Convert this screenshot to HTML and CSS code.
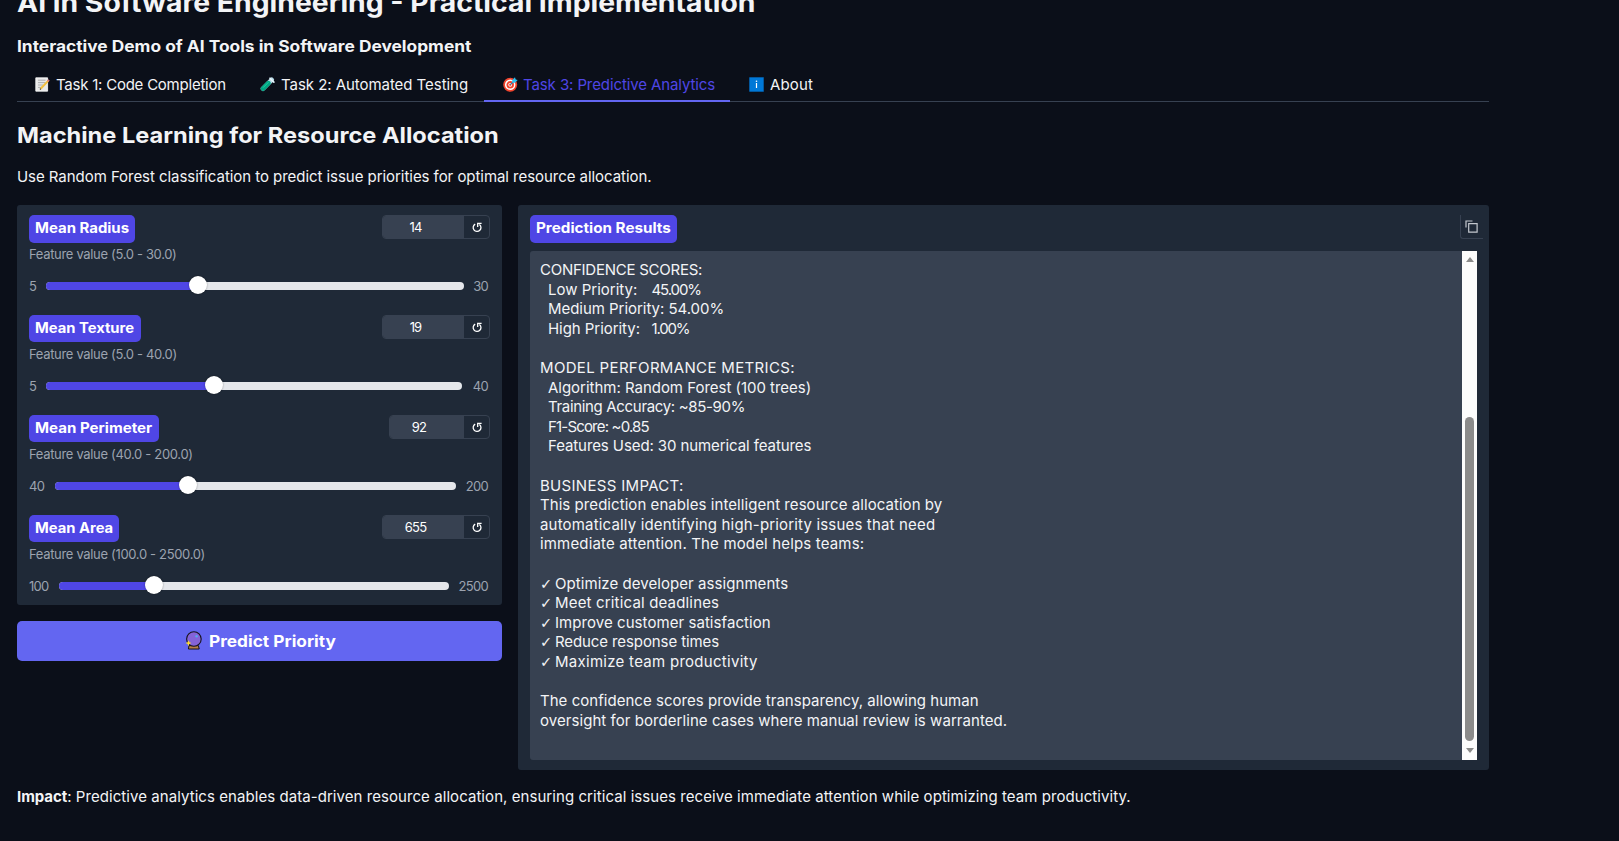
FILE: index.html
```
<!DOCTYPE html>
<html lang="en">
<head>
<meta charset="utf-8">
<title>AI in Software Engineering</title>
<link rel="stylesheet" href="styles.css">
</head>
<body>
<main class="page">
  <h1 class="title">AI in Software Engineering - Practical Implementation</h1>
  <h3 class="subtitle">Interactive Demo of AI Tools in Software Development</h3>

  <nav class="tabs">
    <a class="tab tab-code">
      <svg class="emoji" viewBox="0 0 15 15"><path d="M.8.8h11.8v13.4H.8z" fill="#e9e9e9" stroke="#fff" stroke-width=".8"/><path d="M3 3.2h7.5M3 5.6h7.5M3 8h5M3 10.4h4" stroke="#a9a9ab" stroke-width=".9"/><path d="M5.6 11.8 13.4 3.6" stroke="#f3bf3d" stroke-width="2"/><path d="m12.7 4.3 1.3-1.4" stroke="#d9767c" stroke-width="2"/><path d="m5 12.5.7-.8" stroke="#333" stroke-width="1.2"/></svg>
      <span>Task 1: Code Completion</span></a>
    <a class="tab tab-test">
      <svg class="emoji" viewBox="0 0 15 15"><path d="M11.7 2.8 3 11.7" stroke="#b9dcea" stroke-width="4.6" stroke-linecap="round"/><path d="M8.4 6.2 3 11.7" stroke="#00a583" stroke-width="4.6" stroke-linecap="round"/><path d="M8.5 5.2 3 10.7" stroke="#24cfa4" stroke-width="1" /><path d="m10 1.2 3.9 3.9" stroke="#e8f6fc" stroke-width="1.6" stroke-linecap="round"/></svg>
      <span>Task 2: Automated Testing</span></a>
    <a class="tab tab-predict active">
      <svg class="emoji" viewBox="0 0 15 15"><circle cx="7.2" cy="7.8" r="7" fill="#f0442d"/><circle cx="7.2" cy="7.8" r="4.5" fill="none" stroke="#fff" stroke-width="1.5"/><circle cx="7.2" cy="7.8" r="1.9" fill="#fff"/><circle cx="7.2" cy="7.8" r="1.1" fill="#f0442d"/><path d="m7.4 7.7 5-5" stroke="#217fb6" stroke-width="1.1"/><path d="M9.3 5.7V3L12 .3l.6 2.1 2.1.6L12 5.7z" fill="#2bc4f3"/></svg>
      <span>Task 3: Predictive Analytics</span></a>
    <a class="tab tab-about">
      <svg class="emoji" viewBox="0 0 15 15"><path d="M.3.3h14.4v14.4H.3z" fill="#0078d7"/><path d="M7.5 6v5" stroke="#fff" stroke-width="1.2"/><circle cx="7.5" cy="4.2" r=".8" fill="#fff"/></svg>
      <span>About</span></a>
  </nav>

  <h2 class="heading">Machine Learning for Resource Allocation</h2>
  <p class="intro">Use Random Forest classification to predict issue priorities for optimal resource allocation.</p>

  <div class="columns">
    <section class="left">
      <div class="sliders">
        <div class="field">
          <div class="field-head"><span class="label l-radius"><b>Mean Radius</b></span>
            <div class="number"><span class="value">14</span><span class="reset"><svg viewBox="0 0 10 11"><path d="M3.2 2.1A3.9 3.9 0 1 0 7.4 2.4"/><path d="M9.6 1.4H5.7V5"/></svg></span></div></div>
          <div class="hint">Feature value (5.0 - 30.0)</div>
          <div class="range"><span>5</span><div class="track"><div class="fill" style="width:152px"></div></div><span>30</span></div>
        </div>
        <div class="field">
          <div class="field-head"><span class="label l-texture"><b>Mean Texture</b></span>
            <div class="number"><span class="value">19</span><span class="reset"><svg viewBox="0 0 10 11"><path d="M3.2 2.1A3.9 3.9 0 1 0 7.4 2.4"/><path d="M9.6 1.4H5.7V5"/></svg></span></div></div>
          <div class="hint">Feature value (5.0 - 40.0)</div>
          <div class="range r-texture"><span>5</span><div class="track"><div class="fill" style="width:168px"></div></div><span>40</span></div>
        </div>
        <div class="field">
          <div class="field-head"><span class="label l-perimeter"><b>Mean Perimeter</b></span>
            <div class="number narrow"><span class="value">92</span><span class="reset"><svg viewBox="0 0 10 11"><path d="M3.2 2.1A3.9 3.9 0 1 0 7.4 2.4"/><path d="M9.6 1.4H5.7V5"/></svg></span></div></div>
          <div class="hint">Feature value (40.0 - 200.0)</div>
          <div class="range r-perimeter"><span>40</span><div class="track"><div class="fill" style="width:133px"></div></div><span>200</span></div>
        </div>
        <div class="field">
          <div class="field-head"><span class="label l-area"><b>Mean Area</b></span>
            <div class="number"><span class="value">655</span><span class="reset"><svg viewBox="0 0 10 11"><path d="M3.2 2.1A3.9 3.9 0 1 0 7.4 2.4"/><path d="M9.6 1.4H5.7V5"/></svg></span></div></div>
          <div class="hint">Feature value (100.0 - 2500.0)</div>
          <div class="range r-area"><span>100</span><div class="track"><div class="fill" style="width:95px"></div></div><span>2500</span></div>
        </div>
      </div>
      <button class="predict">
        <svg class="crystal" viewBox="0 0 17 19"><path d="M4 14.6h9.4l.8 3.4H3.4z" fill="#b98047" stroke="#17131c" stroke-width="1"/><circle cx="8.9" cy="8" r="7.3" fill="#8463d8" stroke="#17131c" stroke-width="1.1"/><circle cx="11.6" cy="5.2" r="1.2" fill="#55a9ee"/><path d="m3.5 9.2.8 2.1 2.1.8-2.1.8-.8 2.1-.8-2.1-2.1-.8 2.1-.8z" fill="#ffdc2e"/></svg>
        <span class="predict-text">Predict Priority</span>
      </button>
    </section>

    <section class="results">
      <div class="results-head"><span class="label l-results"><b>Prediction Results</b></span>
        <span class="copy"><svg viewBox="0 0 13 13"><path d="M3.7 3.7h8.4v8.4H3.7z"/><path d="M1 7.5V1h6.5"/></svg></span></div>
      <div class="output">
        <div class="text">
          <div class="line n1">CONFIDENCE SCORES:</div>
          <div class="line in pair"><span class="n2">Low Priority:</span><span class="n3">45.00%</span></div>
          <div class="line in n4">Medium Priority: 54.00%</div>
          <div class="line in pair"><span class="n5">High Priority:</span><span class="n6">1.00%</span></div>
          <div class="line"></div>
          <div class="line n7">MODEL PERFORMANCE METRICS:</div>
          <div class="line in n8">Algorithm: Random Forest (100 trees)</div>
          <div class="line in n9">Training Accuracy: ~85-90%</div>
          <div class="line in n10">F1-Score: ~0.85</div>
          <div class="line in n11">Features Used: 30 numerical features</div>
          <div class="line"></div>
          <div class="line n12">BUSINESS IMPACT:</div>
          <div class="line n13">This prediction enables intelligent resource allocation by</div>
          <div class="line n14">automatically identifying high-priority issues that need</div>
          <div class="line n15">immediate attention. The model helps teams:</div>
          <div class="line"></div>
          <div class="line n16"><span class="check">✓</span>Optimize developer assignments</div>
          <div class="line n17"><span class="check">✓</span>Meet critical deadlines</div>
          <div class="line n18"><span class="check">✓</span>Improve customer satisfaction</div>
          <div class="line n19"><span class="check">✓</span>Reduce response times</div>
          <div class="line n20"><span class="check">✓</span>Maximize team productivity</div>
          <div class="line"></div>
          <div class="line n21">The confidence scores provide transparency, allowing human</div>
          <div class="line n22">oversight for borderline cases where manual review is warranted.</div>
        </div>
        <div class="scrollbar"><i class="up"></i><i class="thumb"></i><i class="down"></i></div>
      </div>
    </section>
  </div>

  <p class="impact"><strong>Impact</strong>: Predictive analytics enables data-driven resource allocation, ensuring critical issues receive immediate attention while optimizing team productivity.</p>
</main>
</body>
</html>
```
FILE: styles.css
```
* { box-sizing: border-box; }
html, body { margin: 0; height: 100%; overflow: hidden; }
body { background: #0b0f19; color: #f3f4f6; font: 400 15px/23px Inter, "Open Sans", sans-serif; }
h1, h2, h3, p { margin: 0; }
.page { width: 1472px; margin: -13px 0 0 17px; white-space: nowrap; }

.title, .subtitle, .heading, .label b { transform-origin: 0 50%; }
.title { font-size: 26px; line-height: 32px; font-weight: 700; transform: scaleX(1.09); }
.subtitle { margin-top: 15px; font-size: 16px; line-height: 24px; font-weight: 700; transform: scaleX(1.083); }

.tabs { display: flex; height: 34px; margin-top: 10px; border-bottom: 1px solid #374151; }
.tab { display: flex; align-items: center; gap: 6px; height: 34px; padding: 0 0 2px 18px; }
.tab-code { width: 225px; letter-spacing: -.23px; }
.tab-test { width: 242px; letter-spacing: -.05px; }
.tab-predict { width: 246px; letter-spacing: -.1px; }
.tab-about { gap: 6px; padding-left: 19px; letter-spacing: .17px; }
.active { color: #4f46e5; border-bottom: 2px solid #6366f1; padding-bottom: 0; padding-left: 19px; gap: 5px; }
.emoji { width: 15px; height: 15px; flex: none; }

.heading { margin-top: 18px; font-size: 22px; line-height: 30px; font-weight: 700; transform: scaleX(1.072); }
.intro { margin-top: 15px; letter-spacing: -.05px; }

.columns { display: flex; gap: 16px; height: 565px; margin-top: 17px; }
.left { width: 485px; display: flex; flex-direction: column; gap: 16px; }
.sliders { background: #1f2937; border-radius: 3px; height: 400px; }
.field { height: 100px; padding: 10px 12px 0; }
.field-head { display: flex; justify-content: space-between; height: 29px; }
.label { height: 27px; padding: 0 6px; border-radius: 5px; background: #4f46e5; color: #fff; font-size: 14px; line-height: 26px; font-weight: 700; }
.label b { display: inline-block; font-weight: 700; transform: scaleX(1.067); }
.field:first-child .label, .l-results { height: 28px; }
.l-radius { width: 106px; }
.l-texture { width: 112px; }
.l-texture b { transform: scaleX(1.055); }
.l-perimeter { width: 130px; }
.l-perimeter b { transform: scaleX(1.078); }
.l-area { width: 90px; }
.l-area b { transform: scaleX(1.055); }
.l-results { width: 147px; }
.l-results b { transform: scaleX(1.088); }
.number { display: flex; width: 108px; height: 24px; border: 1px solid #374151; border-radius: 4px; overflow: hidden; }
.narrow { width: 101px; }
.value { flex: 1; background: #374151; color: #fff; font-size: 13px; line-height: 22px; text-align: center; padding-right: 16px; letter-spacing: -.8px; }
.reset { width: 25px; display: flex; align-items: center; justify-content: center; }
.reset svg { width: 10px; height: 11px; fill: none; stroke: #fff; stroke-width: 1.3; }
.hint { font-size: 13px; line-height: 20px; height: 20px; color: #9ca3af; letter-spacing: -.33px; }
.range { display: flex; align-items: center; height: 20px; margin-top: 12px; font-size: 13px; line-height: 20px; color: #9ca3af; gap: 10px; letter-spacing: -.7px; }
.range span:first-child { width: 7px; }
.range span:last-child { width: 15px; margin-right: 2px; text-align: right; }
.track { flex: 1; height: 8px; margin-right: -1px; border-radius: 4px; background: #e5e7eb; }
.r-texture span:last-child { width: 16px; }
.r-texture .track { margin-right: 0; }
.r-perimeter span:first-child { width: 16px; }
.r-area span:first-child { width: 20px; }
.r-perimeter span:last-child { width: 23px; }
.r-area span:last-child { width: 30px; }
.fill { position: relative; height: 8px; border-radius: 4px 0 0 4px; background: #4f46e5; }
.fill::after { content: ""; position: absolute; right: -9px; top: -6px; width: 18px; height: 18px; border-radius: 50%; background: #fff; box-shadow: 0 0 2px rgba(0, 0, 0, .4); }

.predict { display: flex; align-items: center; justify-content: center; gap: 7px; height: 40px; border: 0; border-radius: 5px; background: #6366f1; color: #fff; font: 700 16px/24px Inter, sans-serif; padding: 0 0 1px; }
.predict-text { width: 126px; text-align: left; transform: scaleX(1.08); transform-origin: 0 50%; }
.crystal { width: 17px; height: 19px; }

.results { flex: 1; background: #1f2937; border-radius: 3px; padding: 10px 12px; }
.results-head { display: flex; justify-content: space-between; height: 36px; }
.copy { width: 23px; height: 24px; margin-right: -6px; border: solid #374151; border-width: 0 0 1px 1px; border-bottom-left-radius: 3px; padding: 5px 0 0 4px; }
.copy svg { display: block; width: 13px; height: 13px; fill: none; stroke: #c3c7ce; stroke-width: 1.2; }
.output { display: flex; height: 509px; background: #374151; border-radius: 3px 0 0 3px; }
.text { flex: 1; padding: 9px 0 0 10px; }
.line { height: 19.6px; line-height: 19.5px; }
.in { padding-left: 8px; }
.pair { display: flex; }
.pair span:first-child { width: 103.5px; }
.check { display: inline-block; width: 15px; font-family: "DejaVu Sans", sans-serif; font-size: 14.5px; line-height: 19px; letter-spacing: 0; }
.n1 { letter-spacing: -.25px; }
.n3 { letter-spacing: -1.1px; }
.n4 { letter-spacing: -.04px; }
.n5 { letter-spacing: -.05px; }
.n6 { letter-spacing: -1.2px; }
.n7 { letter-spacing: .34px; }
.n8 { letter-spacing: -.02px; }
.n9 { letter-spacing: -.33px; }
.n10 { letter-spacing: -.82px; }
.n11 { letter-spacing: -.09px; }
.n12 { letter-spacing: .31px; }
.n13 { letter-spacing: .06px; }
.n14 { letter-spacing: .17px; }
.n15 { letter-spacing: .16px; }
.n16 { letter-spacing: .06px; }
.n17 { letter-spacing: .17px; }
.n18 { letter-spacing: .06px; }
.n19 { letter-spacing: -.1px; }
.n20 { letter-spacing: .28px; }
.n21 { letter-spacing: .035px; }
.n22 { letter-spacing: .06px; }
.scrollbar { display: flex; flex-direction: column; align-items: center; width: 15px; padding: 6px 0 7px; background: #fcfcfc; }
.up, .down { border: 4.5px solid transparent; border-top-width: 0; border-bottom: 5px solid #8b8b8b; }
.down { border-top: 5px solid #8b8b8b; border-bottom-width: 0; }
.thumb { width: 9px; height: 324px; margin: auto 0 7px; border-radius: 5px; background: #8b8b8b; }

.impact { margin-top: 15px; letter-spacing: .063px; }
.impact strong { font-weight: 700; letter-spacing: -.06px; }
```
